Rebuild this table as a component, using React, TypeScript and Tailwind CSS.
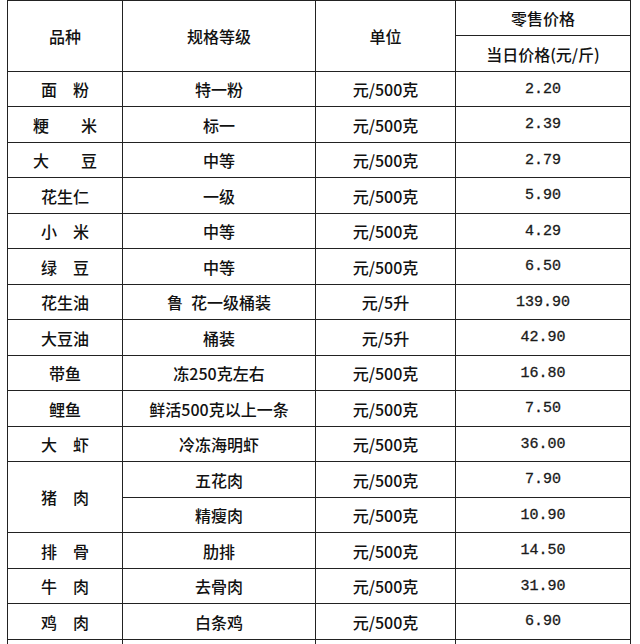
const rows: [string, string, string, string][] = [
  ["面　粉", "特一粉", "元/500克", "2.20"],
  ["粳　　米", "标一", "元/500克", "2.39"],
  ["大　　豆", "中等", "元/500克", "2.79"],
  ["花生仁", "一级", "元/500克", "5.90"],
  ["小　米", "中等", "元/500克", "4.29"],
  ["绿　豆", "中等", "元/500克", "6.50"],
  ["花生油", "鲁\u2002花一级桶装", "元/5升", "139.90"],
  ["大豆油", "桶装", "元/5升", "42.90"],
  ["带鱼", "冻250克左右", "元/500克", "16.80"],
  ["鲤鱼", "鲜活500克以上一条", "元/500克", "7.50"],
  ["大　虾", "冷冻海明虾", "元/500克", "36.00"],
];

const tail: [string, string, string, string][] = [
  ["排　骨", "肋排", "元/500克", "14.50"],
  ["牛　肉", "去骨肉", "元/500克", "31.90"],
  ["鸡　肉", "白条鸡", "元/500克", "6.90"],
];

const cell = "flex items-center justify-center bg-white whitespace-pre text-[16px] font-medium text-[#111]";
const price = "flex items-center justify-center bg-white font-['Liberation_Mono',monospace] text-[15px] text-[#1a1a1a] [-webkit-text-stroke:0.3px_#1a1a1a]";

function Row({ r }: { r: [string, string, string, string] }) {
  return (
    <>
      <div className={cell}>{r[0]}</div>
      <div className={cell}>{r[1]}</div>
      <div className={cell}>{r[2]}</div>
      <div className={price}>{r[3]}</div>
    </>
  );
}

export default function App() {
  return (
    <div className="h-[644px] w-[640px] overflow-hidden bg-white font-['Noto_Sans_CJK_SC','Noto_Sans',sans-serif] leading-none">
      <div className="ml-[7px] grid w-[624px] grid-cols-[114px_192px_139px_174px] grid-rows-[34px_35px_repeat(8,34px_35px)_35px] gap-px bg-[#222] p-px">
        <div className={`${cell} row-span-2`}>品种</div>
        <div className={`${cell} row-span-2`}>规格等级</div>
        <div className={`${cell} row-span-2`}>单位</div>
        <div className={cell}>零售价格</div>
        <div className={cell}>当日价格(元/斤)</div>

        {rows.map((r) => (
          <Row key={r[0]} r={r} />
        ))}

        <div className={`${cell} row-span-2`}>猪　肉</div>
        <div className={cell}>五花肉</div>
        <div className={cell}>元/500克</div>
        <div className={price}>7.90</div>
        <div className={cell}>精瘦肉</div>
        <div className={cell}>元/500克</div>
        <div className={price}>10.90</div>

        {tail.map((r) => (
          <Row key={r[0]} r={r} />
        ))}

        <div className="bg-white" />
        <div className="bg-white" />
        <div className="bg-white" />
        <div className="bg-white" />
      </div>
    </div>
  );
}
